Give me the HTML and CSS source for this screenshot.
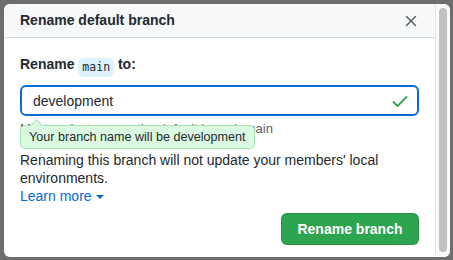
FILE: index.html
```html
<!DOCTYPE html>
<html lang="en">
<head>
  <meta charset="UTF-8">
  <title>Rename default branch</title>
  <link rel="stylesheet" href="styles.css">
</head>
<body>
  <div class="dialog">
    <div class="dialog-main">
      <div class="dialog-header">
        <h2>Rename default branch</h2>
        <button class="close" aria-label="Close">
          <svg width="12" height="12" viewBox="0 0 12 12"><path d="M1.5 1.5l9 9M10.5 1.5l-9 9" stroke="#57606a" stroke-width="1.5" stroke-linecap="round"/></svg>
        </button>
      </div>

      <div class="dialog-body">
        <label class="field-label" for="branch">Rename <code>main</code> to:</label>
        <div class="input-wrap">
          <input id="branch" type="text" value="development" autofocus>
          <svg class="check" width="20" height="20" viewBox="0 0 16 16"><path fill="#2da44e" d="M13.78 4.22a.75.75 0 010 1.06l-7.25 7.25a.75.75 0 01-1.06 0L2.22 9.28a.75.75 0 011.06-1.06L6 10.94l6.72-6.72a.75.75 0 011.06 0z"/></svg>
        </div>
        <div class="hint">
          Most projects name the default branch main
          <div class="tooltip">Your branch name will be development</div>
        </div>
        <p class="note">Renaming this branch will not update your members' local environments.</p>
        <a class="learn" href="#">Learn more <span class="caret"></span></a>
        <div class="actions">
          <button class="btn-primary">Rename branch</button>
        </div>
      </div>
    </div>
    <div class="scrollbar"><div class="thumb"></div></div>
  </div>
</body>
</html>
```

FILE: styles.css
```css
body {
  margin: 0;
  padding: 4px 3px 3px 4px;
  background: #6e6e6e;
  font-family: "Liberation Sans", Arial, sans-serif;
  color: #24292f;
}

.dialog {
  display: flex;
  width: 446px;
  height: 253px;
  background: #ffffff;
  border-radius: 6px;
  overflow: hidden;
}

.dialog-main {
  flex: 1;
}

.dialog-header {
  display: flex;
  align-items: center;
  justify-content: space-between;
  padding: 6px 16px;
  background: #f6f8fa;
  border-bottom: 1px solid #d0d7de;
}

.dialog-header h2 {
  margin: 0;
  font-size: 14px;
  line-height: 21px;
  font-weight: bold;
}

.close {
  border: none;
  background: none;
  padding: 0;
  margin-right: 2px;
  width: 12px;
  height: 12px;
  display: flex;
}

.dialog-body {
  padding: 16px;
}

.field-label {
  display: block;
  font-size: 14px;
  font-weight: bold;
  line-height: 20px;
}

.field-label code {
  display: inline-block;
  font-family: "DejaVu Sans Mono", "Liberation Mono", monospace;
  font-weight: normal;
  font-size: 11.5px;
  line-height: 15px;
  padding: 2px 4px;
  background: #ddf4ff;
  border-radius: 6px;
  vertical-align: -2px;
}

.input-wrap {
  position: relative;
  margin-top: 8px;
}

.input-wrap input {
  display: block;
  box-sizing: border-box;
  width: 100%;
  height: 31px;
  padding: 0 11px;
  border: 2px solid #0969da;
  border-radius: 6px;
  font-family: inherit;
  font-size: 14px;
  color: #24292f;
  outline: none;
}

.check {
  position: absolute;
  right: 9px;
  top: 6px;
}

.hint {
  position: relative;
  margin-top: 4px;
  font-size: 13px;
  line-height: 18px;
  color: #57606a;
}

.tooltip {
  position: absolute;
  left: 0;
  top: 5px;
  width: 235px;
  box-sizing: border-box;
  padding: 3px 8px;
  background: #dafbe1;
  border: 1px solid #a6e3b3;
  border-radius: 5px;
  font-size: 12.6px;
  line-height: 16px;
  color: #24292f;
  white-space: nowrap;
}

.tooltip::before {
  content: "";
  position: absolute;
  left: 11px;
  top: -5px;
  width: 8px;
  height: 8px;
  background: #dafbe1;
  border-top: 1px solid #a6e3b3;
  border-left: 1px solid #a6e3b3;
  transform: rotate(45deg);
}

.note {
  margin: 14px 0 0;
  font-size: 14px;
  line-height: 17.5px;
}

.learn {
  display: inline-block;
  font-size: 14px;
  line-height: 17.5px;
  color: #0969da;
  text-decoration: none;
}

.caret {
  display: inline-block;
  vertical-align: middle;
  border-left: 4px solid transparent;
  border-right: 4px solid transparent;
  border-top: 4px solid #0969da;
  margin-left: 1px;
}

.actions {
  display: flex;
  justify-content: flex-end;
  margin-top: 7px;
}

.btn-primary {
  width: 138px;
  height: 32px;
  border: 1px solid rgba(27, 31, 36, 0.15);
  border-radius: 6px;
  background: #2da44e;
  color: #ffffff;
  font-family: inherit;
  font-size: 14px;
  font-weight: bold;
}

.scrollbar {
  width: 15px;
  padding: 4px 3px 5px 3px;
  box-sizing: border-box;
  border-left: 1px solid #e6e6e6;
  background: #fafafa;
}

.thumb {
  height: 100%;
  border-radius: 4px;
  background: #c1c1c1;
}
```
